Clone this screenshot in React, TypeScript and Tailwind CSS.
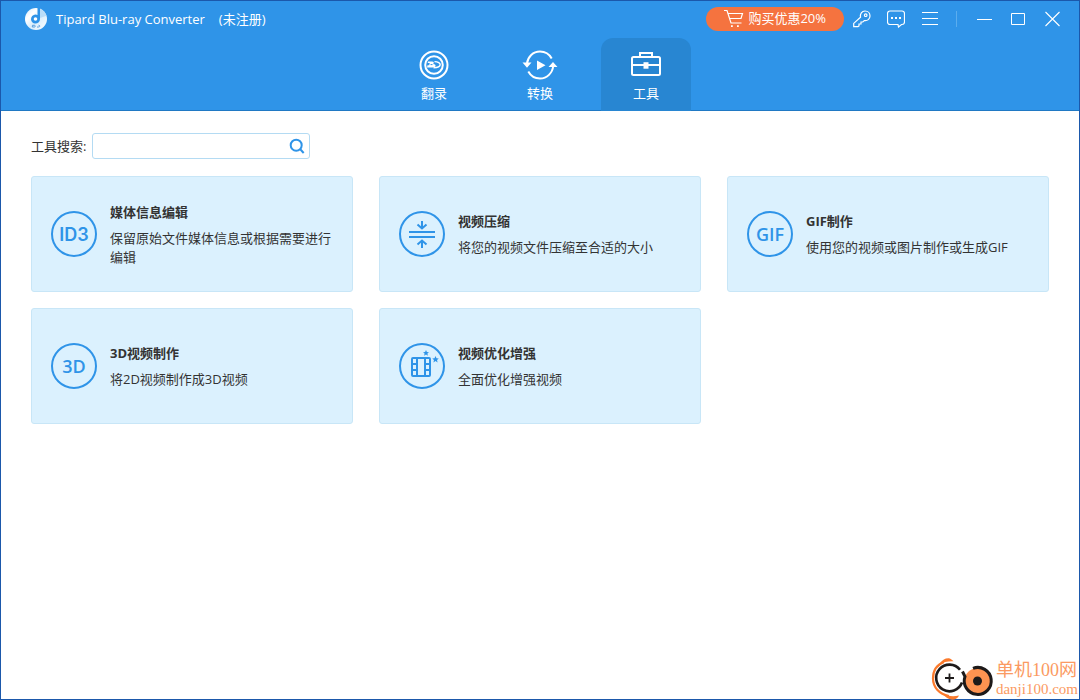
import React from "react";

type IconProps = { className?: string };

function AppLogo() {
  return (
    <svg width="24" height="24" viewBox="0 0 24 24" aria-hidden="true">
      <defs>
        <linearGradient id="disc" x1="0" y1="0" x2="1" y2="1">
          <stop offset="0" stopColor="#d5ecfc" />
          <stop offset="0.3" stopColor="#ffffff" />
          <stop offset="0.55" stopColor="#d9eefc" />
          <stop offset="1" stopColor="#ffffff" />
        </linearGradient>
      </defs>
      <circle cx="12" cy="12" r="11" fill="url(#disc)" />
      <path d="M13.500 0H16v12a4.500 4.500 0 1 1-2.500-4z" fill="#2f94e8" />
      <path d="M16 1.700a11 11 0 0 1 6.500 7L16 11z" fill="#b9ddf8" />
      <circle cx="11.500" cy="12" r="1.800" fill="#ffffff" />
      <path d="M8.500 18.300H10.500c1 0 1 1.700 0 1.700H8.300zM13 20c3 .400 4-1.500 1.500-1.800" fill="none" stroke="#5b9edb" />
    </svg>
  );
}

function CartIcon() {
  return (
    <svg width="20" height="20" viewBox="0 0 20 20" fill="none" stroke="#fff" strokeWidth="1.200" aria-hidden="true">
      <path d="M0 1.500h3l4 12.500h10.500M4 4.500h14.500L17 9.500H5.800" />
      <path d="M7 16.200h1.800v1.800H7zM13 16.200h1.800v1.800H13z" fill="#fff" stroke="none" />
    </svg>
  );
}

function KeyIcon() {
  return (
    <svg width="18" height="18" viewBox="0 0 18 18" fill="none" stroke="#fff" strokeWidth="1.200" aria-hidden="true">
      <path d="M7.500 7.200C6.900 3.900 8.800 1 12 1c2.900 0 5 2.200 5 5 0 3.100-2.600 5.100-5.700 4.600L9.800 12H8v2H6v2l-1 .600H.700v-3.200z" />
      <circle cx="12.700" cy="5.200" r="1.300" />
    </svg>
  );
}

function ChatIcon() {
  return (
    <svg width="18" height="18" viewBox="0 0 18 18" fill="none" stroke="#fff" strokeWidth="1.200" aria-hidden="true">
      <path d="M11 14.500H3a2.500 2.500 0 0 1-2.500-2.500V3.500A2.500 2.500 0 0 1 3 1h12a2.500 2.500 0 0 1 2.500 2.500V12a2.500 2.500 0 0 1-2.500 2.500h-.500L11.500 17z" />
      <path d="M4 7h2v2H4zM8 7h2v2H8zM12 7h2v2h-2z" fill="#fff" stroke="none" />
    </svg>
  );
}

function MenuIcon() {
  return (
    <svg width="16" height="14" viewBox="0 0 16 14" fill="none" stroke="#fff" aria-hidden="true">
      <path d="M0 .500h16M0 6.500h16M0 12.500h16" />
    </svg>
  );
}

function MinimizeIcon() {
  return (
    <svg width="16" height="14" viewBox="0 0 16 14" fill="none" stroke="#fff" aria-hidden="true">
      <path d="M1 7.500h15" />
    </svg>
  );
}

function MaximizeIcon() {
  return (
    <svg width="14" height="14" viewBox="0 0 14 14" fill="none" stroke="#fff" aria-hidden="true">
      <path d="M.500 1.500h13v11H.500z" />
    </svg>
  );
}

function CloseIcon() {
  return (
    <svg width="16" height="16" viewBox="0 0 16 16" fill="none" stroke="#fff" strokeWidth="1.100" aria-hidden="true">
      <path d="M1.500 1l14 14M15.500 1l-14 14" />
    </svg>
  );
}

function RipIcon() {
  return (
    <svg width="36" height="32" viewBox="0 0 36 32" fill="none" stroke="#fff" strokeWidth="2" aria-hidden="true">
      <circle cx="18" cy="16" r="13.500" />
      <circle cx="18" cy="16" r="8.800" />
      <path
        d="M12 12.500h4c2 0 2.500 1.500 1 2.500 3.500 0 3.500 3.500-.500 3.500H11l.500-2.200h1.700l.500-2.300h-2z"
        fill="#fff"
        stroke="none"
      />
      <path d="M18.500 12.600c7.500 0 8 6-1 6.200" strokeWidth="1.400" />
      <path d="M14.500 15.600h2" stroke="#2f94e8" strokeWidth="1" />
    </svg>
  );
}

function ConvertIcon() {
  return (
    <svg width="36" height="32" viewBox="0 0 36 32" fill="none" stroke="#fff" strokeWidth="2" aria-hidden="true">
      <path d="M5 14.500C5.800 7.800 11 2.500 18 2.500c5.200 0 9.400 2.800 11.700 7" />
      <path d="M31.200 17C30.500 24 25 29.500 18 29.500c-5.200 0-9.400-2.800-11.700-7" />
      <path d="M.500 13.500h9L5 18.700zM26.500 18h9L31 13zM15 11.500v9.500l8.500-4.700z" fill="#fff" stroke="none" />
    </svg>
  );
}

function ToolboxIcon() {
  return (
    <svg width="36" height="32" viewBox="0 0 36 32" fill="none" stroke="#fff" strokeWidth="2" aria-hidden="true">
      <rect x="4" y="8" width="28" height="18" rx="1.500" />
      <path d="M12 8V4h12v4M4 16h28" />
      <path d="M15.500 13.200h5v6.500h-5z" fill="#fff" stroke="none" />
    </svg>
  );
}

function SearchIcon() {
  return (
    <svg width="16" height="16" viewBox="0 0 16 16" fill="none" stroke="#2f94e8" strokeWidth="2" aria-hidden="true">
      <circle cx="7.200" cy="7.200" r="5.500" />
      <path d="M11 11l3.700 4" />
    </svg>
  );
}

function CompressIcon() {
  return (
    <svg width="28" height="30" viewBox="0 0 28 30" fill="none" stroke="#2f94e8" strokeWidth="2" aria-hidden="true">
      <path d="M1 13h26M1 18h26M14 2v7M9.500 5.500L14 9.500l4.500-4M14 29v-7M9.500 25.500L14 21.500l4.500 4" />
    </svg>
  );
}

function EnhanceIcon() {
  return (
    <svg width="34" height="34" viewBox="0 0 34 34" fill="none" stroke="#2f94e8" strokeWidth="2" aria-hidden="true">
      <rect x="7" y="9" width="18" height="18" rx="1" />
      <path d="M12 9v18M20 9v18M7 15h5M7 21h5M20 15h5M20 21h5" />
      <path
        d="M21 1l.900 2 2.100.200-1.600 1.400.500 2.200-1.900-1.200-1.900 1.200.500-2.200L18 3.200l2.100-.200zM30.500 7l1 2.200 2.300.200-1.800 1.600.600 2.400-2.100-1.300-2.100 1.300.600-2.400-1.800-1.600 2.300-.200z"
        fill="#2f94e8"
        stroke="none"
      />
    </svg>
  );
}

function SiteMark({ className }: IconProps) {
  return (
    <svg width="64" height="44" viewBox="0 0 64 44" fill="none" className={className} aria-hidden="true">
      <path d="M13 6C5 9 2 15 2 22.500C2 31 8 38 18 40" stroke="#fb7a2c" strokeWidth="2.200" />
      <path
        d="M8.500 8C11 4 14 2 18 2.200C20 2.400 21 4 22.500 5.200C17 5 12 6 8.500 8zM12 38C16 40 22 41 28 39.500C27 42 24 44 21 43.800C17 43 14 41 12 38z"
        fill="#fb7a2c"
      />
      <circle cx="18.500" cy="22" r="13.500" fill="#fff" />
      <path d="M29 13.800A13.300 13.300 0 1 0 31 26.500" stroke="#1d1a1a" strokeWidth="2.600" />
      <circle cx="46.500" cy="25" r="13" fill="#fd9351" />
      <path d="M42 12.300A13.500 13.500 0 1 1 34 20.500L31.500 15.500" stroke="#1d1a1a" strokeWidth="3" />
      <circle cx="46.500" cy="25" r="4.500" fill="#1d1a1a" />
      <path d="M14 22h9M18.500 17.500v9" stroke="#1d1a1a" strokeWidth="1.800" />
    </svg>
  );
}

const TABS = [
  { label: "翻录", icon: <RipIcon />, active: false },
  { label: "转换", icon: <ConvertIcon />, active: false },
  { label: "工具", icon: <ToolboxIcon />, active: true },
];

const TOOLS = [
  {
    title: "媒体信息编辑",
    text: "保留原始文件媒体信息或根据需要进行编辑",
    icon: <span className="font-['Inter'] text-[18px] font-semibold">ID3</span>,
  },
  { title: "视频压缩", text: "将您的视频文件压缩至合适的大小", icon: <CompressIcon /> },
  {
    title: "GIF制作",
    text: "使用您的视频或图片制作或生成GIF",
    icon: <span className="text-[18px] font-semibold">GIF</span>,
  },
  {
    title: "3D视频制作",
    text: "将2D视频制作成3D视频",
    icon: <span className="text-[18px] font-semibold">3D</span>,
  },
  { title: "视频优化增强", text: "全面优化增强视频", icon: <EnhanceIcon /> },
];

function WindowButton({ label, children }: { label: string; children: React.ReactNode }) {
  return (
    <button type="button" aria-label={label} className="flex h-9 w-[34px] items-center justify-center">
      {children}
    </button>
  );
}

export default function App() {
  return (
    <div className="relative flex min-h-screen flex-col border border-[#1b58ab] bg-white font-['Open_Sans','Noto_Sans_CJK_SC',sans-serif] text-[13px] text-[#333]">
      <header className="border-b border-[#2079c4] bg-[#2f94e8] text-white">
        <div className="flex h-9 items-center pr-2.5 pl-[23px]">
          <AppLogo />
          <h1 className="ml-2 flex gap-3.5 pt-0.5">
            <span>Tipard Blu-ray Converter</span>
            <span>(未注册)</span>
          </h1>
          <button
            type="button"
            className="mr-px ml-auto flex h-6 items-center gap-1 rounded-full bg-[#f5733f] px-[18px]"
          >
            <CartIcon />
            购买优惠20%
          </button>
          <WindowButton label="注册">
            <KeyIcon />
          </WindowButton>
          <WindowButton label="反馈">
            <ChatIcon />
          </WindowButton>
          <WindowButton label="菜单">
            <MenuIcon />
          </WindowButton>
          <span className="mr-2.5 ml-[9px] h-4 w-px bg-[#5badee]" />
          <WindowButton label="最小化">
            <MinimizeIcon />
          </WindowButton>
          <WindowButton label="最大化">
            <MaximizeIcon />
          </WindowButton>
          <WindowButton label="关闭">
            <CloseIcon />
          </WindowButton>
        </div>
        <nav className="-mb-px flex justify-center gap-4 pt-px">
          {TABS.map((tab) => (
            <button
              key={tab.label}
              type="button"
              aria-current={tab.active ? "page" : undefined}
              className={`flex h-[73px] w-[90px] flex-col items-center rounded-t-xl pt-[11px] leading-6 ${
                tab.active ? "bg-[#2886d2]" : ""
              }`}
            >
              {tab.icon}
              {tab.label}
            </button>
          ))}
        </nav>
      </header>

      <main className="flex-1 px-[30px] pt-[22px]">
        <form className="flex items-center gap-1.5" onSubmit={(e) => e.preventDefault()}>
          <label htmlFor="tool-search" className="pt-0.5">
            工具搜索:
          </label>
          <div className="flex h-[26px] w-[218px] items-center rounded-[3px] border border-[#b4dbf3] pr-1">
            <input id="tool-search" type="text" className="h-full min-w-0 flex-1 px-2 outline-none" />
            <button type="submit" aria-label="搜索">
              <SearchIcon />
            </button>
          </div>
        </form>

        <ul className="mt-[17px] grid grid-cols-3 gap-x-[26px] gap-y-4">
          {TOOLS.map((tool) => (
            <li key={tool.title}>
              <button
                type="button"
                className="flex h-[116px] w-full items-center gap-[13px] rounded-[3px] border border-[#c8e6f7] bg-[#dbf1fe] pr-4 pl-[19px] text-left"
              >
                <span className="flex size-[46px] shrink-0 items-center justify-center rounded-full border-2 border-[#2f94e8] text-[#2f94e8]">
                  {tool.icon}
                </span>
                <span className="flex flex-col gap-[7px]">
                  <span className="leading-5 font-bold">{tool.title}</span>
                  <span className="leading-[19px]">{tool.text}</span>
                </span>
              </button>
            </li>
          ))}
        </ul>
      </main>

      <div className="absolute -right-px -bottom-px flex items-center gap-px pr-0.5 font-['Liberation_Serif','Noto_Sans_CJK_SC',serif] text-[#fb9a62]">
        <SiteMark />
        <p className="pt-0.5 text-[18px] leading-5">
          单机100网
          <span className="block text-[15px] leading-[18px]">danji100.com</span>
        </p>
      </div>
    </div>
  );
}
